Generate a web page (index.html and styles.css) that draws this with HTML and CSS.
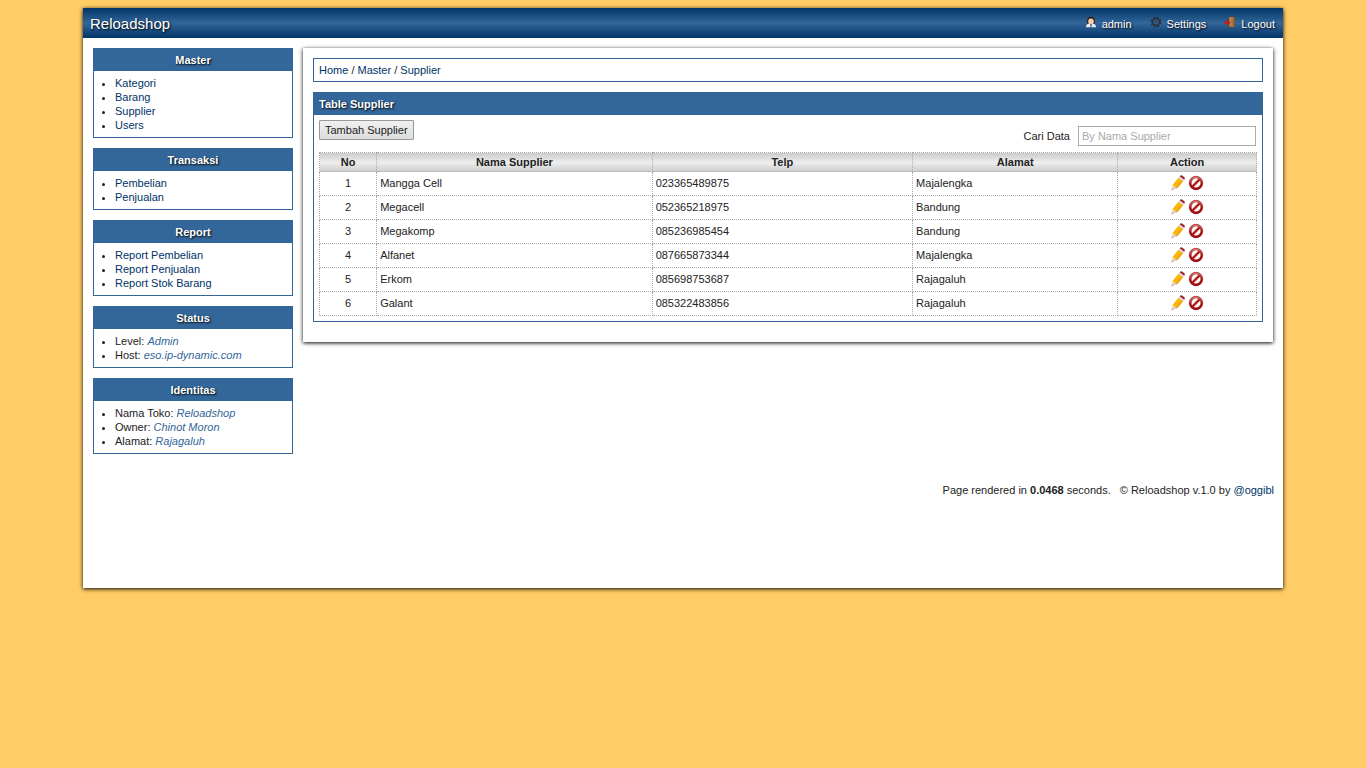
FILE: index.html
```html
<!DOCTYPE html>
<html lang="id">
<head>
<meta charset="utf-8">
<meta name="viewport" content="width=device-width, initial-scale=1">
<title>Reloadshop - Supplier</title>
<link rel="stylesheet" href="styles.css">
</head>
<body>
<svg class="sprite" aria-hidden="true">
  <defs>
    <linearGradient id="red" x1="0" y1="0" x2="0" y2="1"><stop offset="0" stop-color="#cf7474"/><stop offset=".5" stop-color="#b01c1c"/><stop offset="1" stop-color="#a00808"/></linearGradient>
    <linearGradient id="door" x1="0" y1="0" x2="1" y2="0"><stop offset="0" stop-color="#c08a58"/><stop offset="1" stop-color="#96602f"/></linearGradient>
    <symbol id="pencil" viewBox="0 0 16 16">
      <path d="M1.600 15.200 2.600 10 7 13.200z" fill="#e6cdb8"/>
      <path d="M1.600 15.200l.3-1.500 1.100.8z" fill="#666"/>
      <path d="M2.600 10 8.400 2.800l4.600 3.400L7 13.200z" fill="#fbb40c"/>
      <path d="M6.200 12.600 12.200 5.600l.8.6L7 13.200z" fill="#e39a00"/>
      <path d="M8.400 2.800l1.300-1.500 4.500 3.400L13 6.200z" fill="#d5d5d8"/>
      <path d="M9.700 1.300l.8-.9 1.200-.1 3 2.300.1 1.200-.6.900z" fill="#a01f28"/>
    </symbol>
    <symbol id="deny" viewBox="0 0 16 16">
      <circle cx="8" cy="8" r="5.700" fill="#fff" stroke="url(#red)" stroke-width="2.400"/>
      <path d="M4.400 11.600l7.200-7.200" stroke="#b31b1b" stroke-width="2.400"/>
      <circle cx="8" cy="8" r="6.800" fill="none" stroke="#8d1515" stroke-width=".5"/>
    </symbol>
  </defs>
</svg>
<div class="page">
  <header class="topbar">
    <a class="brand" href="#">Reloadshop</a>
    <nav class="topnav">
      <a href="#"><svg class="topicon" viewBox="0 0 12 12"><path d="M2 7.400C1.800 2.800 3 .8 6 .8s4.200 2 4 6.600z" fill="#2b211d"/><path d="M1 11.200c0-2.700 1.500-3.700 5-3.700s5 1 5 3.700z" fill="#e8edf5"/><ellipse cx="6" cy="5.400" rx="2.800" ry="3" fill="#f6cfaa"/><path d="M5 8h2l-.4 3.200H5.400z" fill="#65758f"/></svg>admin</a>
      <a href="#"><svg class="topicon" viewBox="0 0 12 12"><circle cx="6" cy="6" r="4.700" fill="none" stroke="#2b333d" stroke-width="1.600" stroke-dasharray="1.850 1.840"/><circle cx="6" cy="6" r="3.500" fill="none" stroke="#2b333d" stroke-width="1.800"/><circle cx="6" cy="6" r="1" fill="#2b333d"/></svg>Settings</a>
      <a href="#"><svg class="topicon" viewBox="0 0 12 12"><path d="M4 .7h7v10.600H4z" fill="#604028"/><path d="M5.200 1h5.400v10.200l-5.400-.6z" fill="url(#door)"/><path d="M0 6.500 3.200 3.600v1.900H6v2H3.200v1.900z" fill="#d5141b"/></svg>Logout</a>
    </nav>
  </header>
  <div class="columns">
    <aside class="sidebar">
      <section class="box"><h2 class="box-title">Master</h2>
        <ul class="box-list"><li><a href="#">Kategori</a></li><li><a href="#">Barang</a></li><li><a href="#">Supplier</a></li><li><a href="#">Users</a></li></ul></section>
      <section class="box"><h2 class="box-title">Transaksi</h2>
        <ul class="box-list"><li><a href="#">Pembelian</a></li><li><a href="#">Penjualan</a></li></ul></section>
      <section class="box"><h2 class="box-title">Report</h2>
        <ul class="box-list"><li><a href="#">Report Pembelian</a></li><li><a href="#">Report Penjualan</a></li><li><a href="#">Report Stok Barang</a></li></ul></section>
      <section class="box"><h2 class="box-title">Status</h2>
        <ul class="box-list"><li>Level: <em>Admin</em></li><li>Host: <em>eso.ip-dynamic.com</em></li></ul></section>
      <section class="box"><h2 class="box-title">Identitas</h2>
        <ul class="box-list"><li>Nama Toko: <em>Reloadshop</em></li><li>Owner: <em>Chinot Moron</em></li><li>Alamat: <em>Rajagaluh</em></li></ul></section>
    </aside>
    <main class="content">
      <nav class="crumbs"><a href="#">Home</a> / <a href="#">Master</a> / <a href="#">Supplier</a></nav>
      <section class="box">
        <h1 class="box-title box-title-left">Table Supplier</h1>
        <div class="panel">
          <div class="tools">
            <button class="add" type="button">Tambah Supplier</button>
            <div class="search"><label for="cari">Cari Data</label><input id="cari" type="text" placeholder="By Nama Supplier"></div>
          </div>
          <table class="grid">
            <colgroup><col class="c-no"><col class="c-name"><col class="c-telp"><col class="c-addr"><col class="c-act"></colgroup>
            <thead><tr><th>No</th><th>Nama Supplier</th><th>Telp</th><th>Alamat</th><th>Action</th></tr></thead>
            <tbody>
              <tr><td class="mid">1</td><td>Mangga Cell</td><td>023365489875</td><td>Majalengka</td><td><div class="actions"><a href="#" aria-label="Edit"><svg><use href="#pencil"/></svg></a><a href="#" aria-label="Hapus"><svg><use href="#deny"/></svg></a></div></td></tr>
              <tr><td class="mid">2</td><td>Megacell</td><td>052365218975</td><td>Bandung</td><td><div class="actions"><a href="#" aria-label="Edit"><svg><use href="#pencil"/></svg></a><a href="#" aria-label="Hapus"><svg><use href="#deny"/></svg></a></div></td></tr>
              <tr><td class="mid">3</td><td>Megakomp</td><td>085236985454</td><td>Bandung</td><td><div class="actions"><a href="#" aria-label="Edit"><svg><use href="#pencil"/></svg></a><a href="#" aria-label="Hapus"><svg><use href="#deny"/></svg></a></div></td></tr>
              <tr><td class="mid">4</td><td>Alfanet</td><td>087665873344</td><td>Majalengka</td><td><div class="actions"><a href="#" aria-label="Edit"><svg><use href="#pencil"/></svg></a><a href="#" aria-label="Hapus"><svg><use href="#deny"/></svg></a></div></td></tr>
              <tr><td class="mid">5</td><td>Erkom</td><td>085698753687</td><td>Rajagaluh</td><td><div class="actions"><a href="#" aria-label="Edit"><svg><use href="#pencil"/></svg></a><a href="#" aria-label="Hapus"><svg><use href="#deny"/></svg></a></div></td></tr>
              <tr><td class="mid">6</td><td>Galant</td><td>085322483856</td><td>Rajagaluh</td><td><div class="actions"><a href="#" aria-label="Edit"><svg><use href="#pencil"/></svg></a><a href="#" aria-label="Hapus"><svg><use href="#deny"/></svg></a></div></td></tr>
            </tbody>
          </table>
        </div>
      </section>
    </main>
  </div>
  <footer class="foot"><span>Page rendered in <strong>0.0468</strong> seconds.</span><span>© Reloadshop v.1.0 by <a href="#">@oggibl</a></span></footer>
</div>
</body>
</html>
```
FILE: styles.css
```css
* { box-sizing: border-box; }
body {
  margin: 0;
  padding: 8px;
  background: #ffcc66;
  color: #222;
  font: 11px/14px "Liberation Sans", Arial, sans-serif;
}
a { color: #003366; text-decoration: none; }
em { color: #336699; }
.sprite { position: absolute; width: 0; height: 0; }
.page {
  max-width: 1200px;
  min-height: 580px;
  margin: 0 auto;
  padding-bottom: 91px;
  background: #fff;
  box-shadow: 0 1px 4px #000;
}
.topbar {
  display: flex;
  align-items: center;
  justify-content: space-between;
  height: 30px;
  padding: 1px 8px 0 7px;
  background: linear-gradient(#003366, #336699 50%, #003366);
  text-shadow: 1px 1px 2px #000;
}
.topbar a { color: #fff; }
.brand { font-size: 15px; line-height: 28px; }
.topnav { display: flex; gap: 18px; }
.topnav a { display: flex; gap: 5px; align-items: center; }
.topicon { width: 12px; height: 12px; margin-bottom: 4px; }
.columns { display: flex; align-items: flex-start; gap: 10px; padding: 10px; }
.sidebar { display: flex; flex-direction: column; gap: 10px; flex: 0 0 200px; }
.box { border: 1px solid #336699; }
.box-title {
  margin: 0;
  padding: 4px 5px;
  background: #336699;
  color: #fff;
  font-size: 11px;
  line-height: 14px;
  text-align: center;
  text-shadow: 1px 1px 2px #000;
}
.box-title-left { text-align: left; }
.box-list { margin: 0; padding: 5px 5px 5px 21px; }
.content {
  display: flex;
  flex: 1;
  min-width: 0;
  flex-direction: column;
  gap: 10px;
  padding: 10px 10px 20px;
  box-shadow: 0 1px 4px #000;
}
.crumbs { padding: 4px 5px; border: 1px solid #336699; }
.panel { padding: 5px; }
.tools { display: flex; justify-content: space-between; align-items: flex-start; height: 32px; }
.add {
  height: 20px;
  padding: 0 5px;
  border: 1px solid #999;
  border-radius: 1px;
  background: linear-gradient(#f0f0f0, #ddd);
  color: #222;
  font: inherit;
}
.search { display: flex; align-items: center; gap: 8px; padding: 6px 1px 0 0; }
.search input { width: 178px; height: 20px; padding: 0 3px; border: 1px solid #aaa; font: inherit; }
.search input::placeholder { color: #a9a9a9; opacity: 1; }
.grid { width: 100%; border-collapse: collapse; table-layout: fixed; }
.grid th, .grid td { padding: 0 3px; border: 1px dotted #aaa; }
.grid th { height: 19px; }
.grid td { height: 24px; padding-bottom: 2px; }
.grid thead tr { background: linear-gradient(#ccc, #eee 50%, #ccc); }
.grid .mid { text-align: center; }
.c-no { width: 6.1%; }
.c-name { width: 29.4%; }
.c-telp { width: 27.8%; }
.c-addr { width: 21.9%; }
.c-act { width: 14.8%; }
.actions { display: flex; justify-content: center; gap: 2px; }
.actions svg { display: block; width: 16px; height: 16px; }
.foot { display: flex; justify-content: flex-end; gap: 9px; padding: 19px 9px 0; }
```
